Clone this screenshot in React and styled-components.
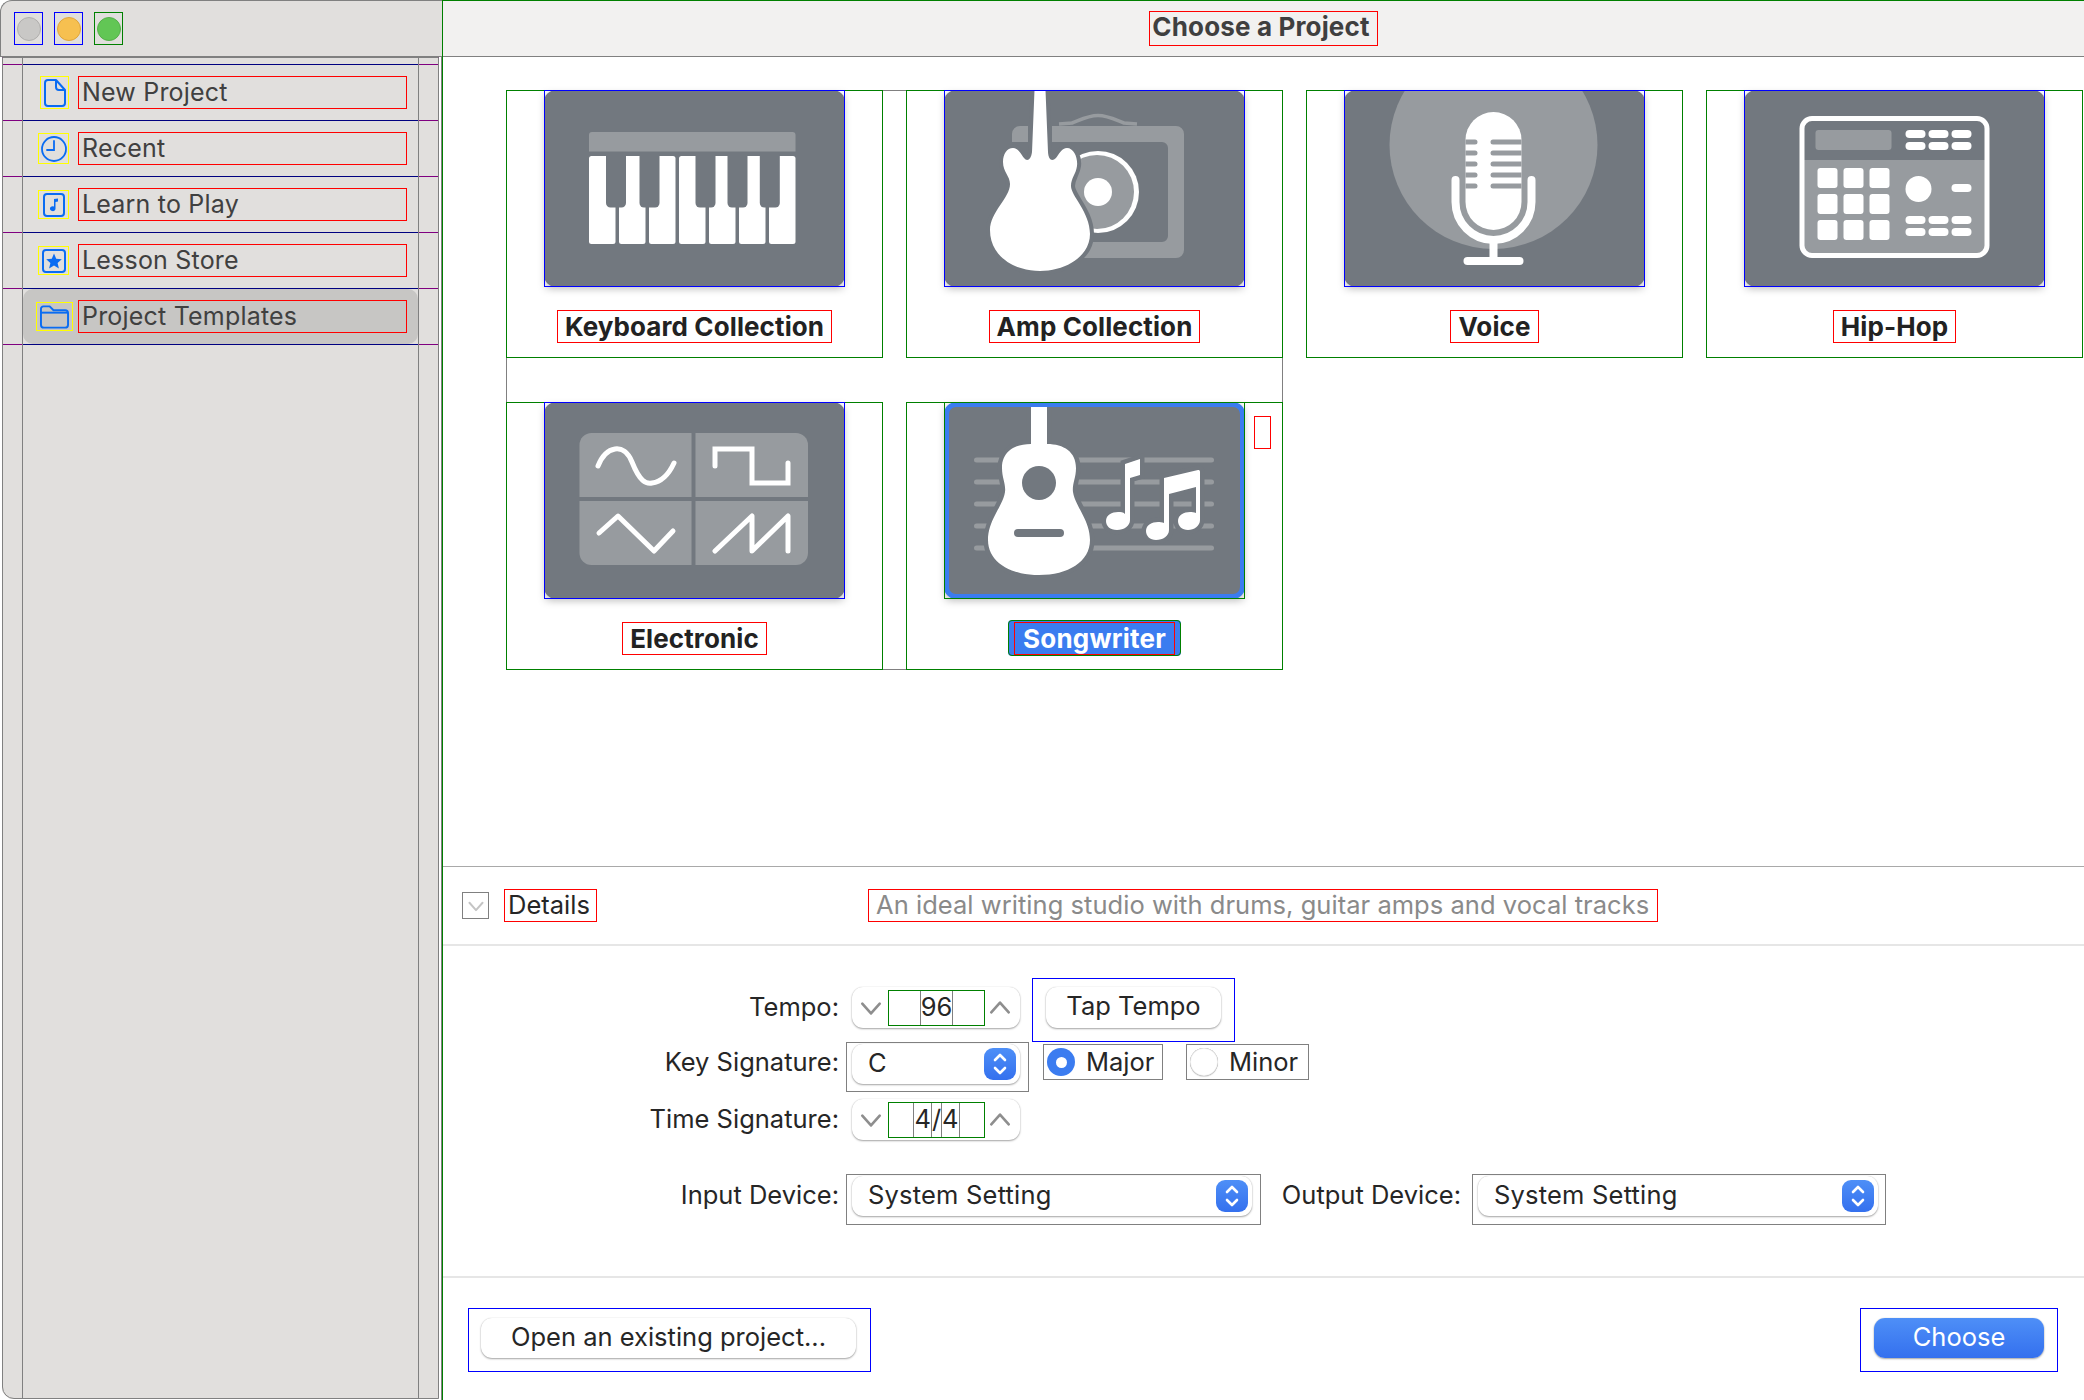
import React from "react";
import { styled, createGlobalStyle, css } from "styled-components";

const Global = createGlobalStyle`
  html, body { margin: 0; padding: 0; background: #fff; }
  body { font-family: Inter, "Noto Sans", "Liberation Sans", sans-serif; overflow: hidden; }
  * { box-sizing: border-box; }
`;

// the reference carries 1px debug frames round most parts
const frame = (c) => css`
  outline: 1px solid ${c};
  outline-offset: -1px;
`;

const GRAY = "#808080";
const BLUE = "#0000ff";
const RED = "#ff0000";
const GREEN = "#008000";
const PURPLE = "#800080";
const NAVY = "#000080";
const YELLOW = "#ffff00";
const TILE = "#72787f";
const SOFT = "#979b9f";
const SYS = "#0a6cf2";

const Page = styled.div`
  width: 2084px;
  height: 1400px;
  display: flex;
  background: #fff;
`;

const Sidebar = styled.aside`
  width: 442px;
  height: 1400px;
  display: flex;
  flex-direction: column;
  border-right: 1px solid ${GRAY};
  padding-bottom: 1px;
`;
const LightsBar = styled.div`
  height: 57px;
  flex: none;
  display: flex;
  align-items: center;
  gap: 11px;
  padding-left: 13px;
  background: #e1dfdd;
  border-top: 1px solid ${GRAY};
  border-left: 1px solid ${GRAY};
  border-top-left-radius: 12px;
  border-bottom: 1px solid ${GRAY};
  margin-right: -1px;
`;
const LightFrame = styled.div`
  width: 29px;
  height: 33px;
  display: flex;
  align-items: center;
  justify-content: center;
  ${(p) => frame(p.$frame)}
`;
const Light = styled.span`
  width: 24px;
  height: 24px;
  border-radius: 50%;
  background: ${(p) => p.$c};
  border: 1px solid ${(p) => p.$b};
`;
const SideBody = styled.div`
  flex: 1;
  display: flex;
  margin-left: 2px;
  width: 437px;
  background: #e1dfdd;
  border-bottom-left-radius: 12px;
  ${frame(GRAY)}
`;
const Gutter = styled.div`
  width: 20px;
  flex: none;
`;
const GutterCell = styled.div`
  height: ${(p) => p.$h}px;
  margin-bottom: -1px;
  box-shadow: inset 0 1px ${PURPLE}, inset 0 -1px ${PURPLE},
    inset ${(p) => (p.$right ? "-1px" : "1px")} 0 ${PURPLE};
`;
const SideColumn = styled.div`
  flex: 1;
  padding-top: 7px;
  ${frame(GRAY)}
`;
const SideRow = styled.div`
  height: 57px;
  margin-bottom: -1px;
  display: flex;
  box-shadow: inset 0 1px ${NAVY}, inset 0 -1px ${NAVY};
`;
const RowFill = styled.div`
  flex: 1;
  margin: 1px;
  display: flex;
  align-items: center;
  border-radius: 10px;
  background: ${(p) => (p.$active ? "#c7c6c4" : "transparent")};
`;
const IconSlot = styled.div`
  width: 46px;
  flex: none;
  display: flex;
  justify-content: flex-end;
`;
const SideIcon = styled.span`
  display: flex;
  align-items: center;
  justify-content: center;
  flex: none;
  width: ${(p) => p.$w}px;
  height: ${(p) => p.$h}px;
  margin-right: ${(p) => p.$shift || 0}px;
  ${frame(YELLOW)}
`;
const SideLabel = styled.div`
  width: 329px;
  height: 33px;
  margin-left: 9px;
  padding-left: 4px;
  font-size: 25px;
  line-height: 33px;
  color: #404040;
  letter-spacing: 0.2px;
  ${frame(RED)}
`;

const Main = styled.main`
  flex: 1;
  height: 1400px;
  display: flex;
  flex-direction: column;
  border-left: 1px solid ${GREEN};
  border-top: 1px solid ${GREEN};
`;
const TitleBar = styled.header`
  height: 56px;
  flex: none;
  display: flex;
  align-items: center;
  justify-content: center;
  background: #f2f1f0;
  border-bottom: 1px solid ${GRAY};
`;
const Title = styled.h1`
  margin: 0;
  padding: 0 8px 0 3px;
  height: 35px;
  font-size: 26px;
  font-weight: 700;
  line-height: 32px;
  letter-spacing: 0.15px;
  color: #3f3f3f;
  ${frame(RED)}
`;
const Templates = styled.section`
  height: 809px;
  flex: none;
  display: flex;
  align-items: flex-start;
  gap: 23px;
  padding: 33px 0 0 63px;
`;
const CardGroup = styled.div`
  display: grid;
  grid-template-columns: 377px 377px;
  column-gap: 23px;
  row-gap: 44px;
  height: 580px;
  ${frame(GRAY)}
`;
const Card = styled.article`
  position: relative;
  width: 377px;
  height: 268px;
  display: flex;
  flex-direction: column;
  align-items: center;
  padding: 0 38px;
  background: #fff;
  ${frame(GREEN)}
`;
const TileFrame = styled.div`
  flex: none;
  width: 301px;
  height: 197px;
  position: relative;
  filter: drop-shadow(0 3px 3px rgba(0, 0, 0, 0.2));
  &::after {
    content: "";
    position: absolute;
    inset: 0;
    pointer-events: none;
    ${(p) => frame(p.$c)}
  }
`;
const Tile = styled.div`
  width: 301px;
  height: 197px;
  border-radius: 12px;
  background: ${TILE};
  overflow: hidden;
  border: ${(p) => (p.$selected ? "5px solid #3b7cf0" : "none")};
  svg {
    display: block;
    margin: ${(p) => (p.$selected ? "-5px" : "0")};
  }
`;
const CardLabel = styled.div`
  margin-top: 23px;
  height: 33px;
  padding: 0 8px;
  font-size: 26px;
  font-weight: 700;
  line-height: 33px;
  letter-spacing: 0.1px;
  color: #222;
  white-space: nowrap;
  ${frame(RED)}
`;
const SelectedLabelWrap = styled.div`
  margin-top: 21px;
  padding: 2px 6px 1px;
  background: #3b7cf0;
  border-radius: 4px;
  ${frame(GREEN)}
`;
const SelectedLabel = styled.div`
  height: 33px;
  padding: 0 9px;
  font-size: 26px;
  font-weight: 700;
  line-height: 33px;
  letter-spacing: 0.2px;
  color: #fff;
  white-space: nowrap;
  ${frame(RED)}
`;
const CheckSlot = styled.span`
  position: absolute;
  left: 348px;
  top: 14px;
  width: 17px;
  height: 33px;
  ${frame(RED)}
`;

const DetailsBar = styled.div`
  height: 80px;
  flex: none;
  display: flex;
  align-items: center;
  padding-left: 19px;
  border-top: 1px solid #a9a9a9;
  border-bottom: 2px solid #e6e6e6;
`;
const Disclosure = styled.span`
  width: 27px;
  height: 27px;
  display: flex;
  align-items: center;
  justify-content: center;
  ${frame(GRAY)}
`;
const DetailsLabel = styled.div`
  margin-left: 15px;
  width: 93px;
  height: 33px;
  padding-left: 4px;
  font-size: 25.5px;
  line-height: 32px;
  color: #262626;
  ${frame(RED)}
`;
const Description = styled.div`
  margin-left: 271px;
  width: 790px;
  height: 33px;
  padding-left: 8px;
  font-size: 25.5px;
  line-height: 32px;
  letter-spacing: 0.04px;
  color: #8a8a8a;
  white-space: nowrap;
  ${frame(RED)}
`;

const Form = styled.div`
  height: 332px;
  flex: none;
  padding-top: 32px;
  border-bottom: 2px solid #e6e6e6;
  font-size: 25.5px;
`;
const FormRow = styled.div`
  height: ${(p) => p.$h}px;
  display: flex;
  align-items: flex-start;
`;
const FieldLabel = styled.label`
  width: ${(p) => p.$w || 396}px;
  margin-left: ${(p) => p.$left || 0}px;
  margin-top: ${(p) => p.$top}px;
  height: 41px;
  flex: none;
  display: flex;
  align-items: center;
  justify-content: flex-end;
  padding-bottom: 3px;
  color: #262626;
  white-space: nowrap;
`;
const Stepper = styled.div`
  width: 168px;
  height: 41px;
  margin: ${(p) => p.$top}px 0 0 13px;
  display: flex;
  align-items: center;
  border-radius: 11px;
  background: #fff;
  box-shadow: 0 1px 2px rgba(0, 0, 0, 0.35), 0 0 1px rgba(0, 0, 0, 0.2);
`;
const StepArrow = styled.span`
  width: ${(p) => p.$w}px;
  flex: none;
  display: flex;
  justify-content: center;
  padding: ${(p) => p.$pad || 0};
`;
const StepField = styled.div`
  width: 97px;
  height: 36px;
  flex: none;
  display: flex;
  align-items: center;
  justify-content: center;
  ${frame(GREEN)}
`;
const StepValue = styled.div`
  height: 36px;
  display: flex;
  align-items: flex-start;
  padding: 0 1px;
  line-height: 34px;
  color: #262626;
  ${frame(GRAY)}
`;
const Slash = styled.span`
  height: 36px;
  padding: 0 1px;
  ${frame(GRAY)}
`;
const PushFrame = styled.div`
  width: ${(p) => p.$w}px;
  height: 64px;
  margin-left: ${(p) => p.$left || 0}px;
  padding: ${(p) => p.$pad};
  flex: none;
  ${frame(BLUE)}
`;
const PushButton = styled.button`
  width: 100%;
  height: ${(p) => p.$h}px;
  display: flex;
  align-items: center;
  justify-content: center;
  padding: 0 0 4px;
  border: none;
  border-radius: 11px;
  background: #fff;
  font: inherit;
  font-size: 25.5px;
  color: #262626;
  white-space: nowrap;
  box-shadow: 0 1px 2px rgba(0, 0, 0, 0.35), 0 0 1px rgba(0, 0, 0, 0.2);
`;
const PrimaryButton = styled(PushButton)`
  background: linear-gradient(#4e8ff7, #3470ee);
  color: #fff;
`;
const SelectFrame = styled.div`
  width: ${(p) => p.$w}px;
  height: ${(p) => p.$h}px;
  margin-left: ${(p) => p.$left}px;
  padding-top: 2px;
  padding-left: 6px;
  flex: none;
  ${frame(GRAY)}
`;
const Select = styled.div`
  width: ${(p) => p.$w}px;
  height: 40px;
  display: flex;
  align-items: center;
  justify-content: space-between;
  padding: 0 4px 0 16px;
  border-radius: 11px;
  background: #fff;
  color: #262626;
  box-shadow: 0 1px 2px rgba(0, 0, 0, 0.35), 0 0 1px rgba(0, 0, 0, 0.2);
`;
const SelectText = styled.span`
  margin-top: -3px;
  letter-spacing: 0.2px;
  white-space: nowrap;
`;
const SelectArrows = styled.span`
  width: 32px;
  height: 32px;
  display: flex;
  align-items: center;
  justify-content: center;
  border-radius: 9px;
  background: linear-gradient(#4e8ff7, #3470ee);
`;
const RadioBox = styled.label`
  width: ${(p) => p.$w}px;
  height: 36px;
  margin: 2px 0 0 ${(p) => p.$left}px;
  flex: none;
  display: flex;
  align-items: center;
  gap: 11px;
  padding-left: 4px;
  color: #262626;
  ${frame(GRAY)}
`;
const RadioText = styled.span`
  margin-top: -1px;
`;
const RadioDot = styled.span`
  width: 28px;
  height: 28px;
  flex: none;
  border-radius: 50%;
  display: flex;
  align-items: center;
  justify-content: center;
  background: ${(p) => (p.$on ? "#3b7cf0" : "#fff")};
  box-shadow: ${(p) => (p.$on ? "none" : "inset 0 0 1px rgba(0,0,0,.6), 0 1px 1px rgba(0,0,0,.15)")};
  &::after {
    content: "";
    width: 11px;
    height: 11px;
    border-radius: 50%;
    background: ${(p) => (p.$on ? "#fff" : "transparent")};
  }
`;
const Footer = styled.footer`
  flex: 1;
  display: flex;
  justify-content: space-between;
  padding: 30px 26px 0 25px;
`;

const Chevron = ({ up, color = "#8e8e8e", size = 24, sw = 2.4 }) => (
  <svg width={size} height={size} viewBox="0 0 22 22" fill="none" stroke={color} strokeWidth={sw} strokeLinecap="round" strokeLinejoin="round">
    <path d={up ? "M3 15 L11 6 L19 15" : "M3 7 L11 16 L19 7"} />
  </svg>
);
const UpDown = () => (
  <svg width="18" height="26" viewBox="0 0 18 26" fill="none" stroke="#fff" strokeWidth="2.6" strokeLinecap="round" strokeLinejoin="round">
    <path d="M4 9 L9 4 L14 9 M4 17 L9 22 L14 17" />
  </svg>
);

const DocIcon = () => (
  <svg width="22" height="28" viewBox="0 0 22 28" fill="none" stroke={SYS} strokeWidth="2" strokeLinejoin="round">
    <path d="M4 1 H12 L21 11 V24 A3 3 0 0 1 18 27 H4 A3 3 0 0 1 1 24 V4 A3 3 0 0 1 4 1 Z" />
    <path d="M12 1 V8 A3 3 0 0 0 15 11 H21" />
  </svg>
);
const ClockIcon = () => (
  <svg width="26" height="26" viewBox="0 0 26 26" fill="none" stroke={SYS} strokeWidth="1.8" strokeLinecap="round">
    <circle cx="13" cy="13" r="12" />
    <path d="M13 5 V14 H6" />
  </svg>
);
const MusicIcon = () => (
  <svg width="22" height="24" viewBox="0 0 22 24" fill="none">
    <rect x="1" y="1" width="20" height="22" rx="3" stroke={SYS} strokeWidth="2" />
    <path d="M11 6 L15 5.5 V8.5 L12.5 9 V15.5 A2.8 2.4 0 1 1 11 13.6 Z" fill={SYS} />
  </svg>
);
const StarIcon = () => (
  <svg width="24" height="24" viewBox="0 0 24 24" fill="none">
    <rect x="1" y="1" width="22" height="22" rx="3" stroke={SYS} strokeWidth="2" />
    <path d="M12 4.5 L14.2 9.7 L19.8 10.2 L15.6 13.9 L16.9 19.4 L12 16.5 L7.1 19.4 L8.4 13.9 L4.2 10.2 L9.8 9.7 Z" fill={SYS} />
  </svg>
);
const FolderIcon = () => (
  <svg width="29" height="24" viewBox="0 0 30 24" fill="none" stroke={SYS} strokeWidth="2" strokeLinejoin="round">
    <path d="M1 6 V3.5 A2.5 2.5 0 0 1 3.5 1 H10 L14 5 H26 A3 3 0 0 1 29 8 V20 A3 3 0 0 1 26 23 H4 A3 3 0 0 1 1 20 Z" />
    <path d="M1 7.5 H29" />
  </svg>
);

const KeyboardArt = () => (
  <svg width="300" height="196" viewBox="0 0 300 196">
    <path d="M45 61.5 V45 a3 3 0 0 1 3 -3 H248.500 a3 3 0 0 1 3 3 V61.500 Z" fill={SOFT} />
    {[0, 1, 2, 3, 4, 5, 6].map((i) => (
      <rect key={i} x={45 + i * 30} y="66" width="26.500" height="88" rx="2.500" fill="#fff" />
    ))}
    {[62, 95.5, 151.5, 183.5, 215.8].map((x) => (
      <path key={x} d={`M${x} 64 h20 v49 a4.500 4.500 0 0 1 -4.500 4.500 h-11 a4.500 4.500 0 0 1 -4.500 -4.500 Z`} fill={TILE} />
    ))}
  </svg>
);

const AmpArt = () => (
  <svg width="300" height="196" viewBox="0 0 300 196">
    <path fillRule="evenodd" d="M75 36 H232 a8 8 0 0 1 8 8 V160 a8 8 0 0 1 -8 8 H76 a8 8 0 0 1 -8 -8 V44 a8 8 0 0 1 8 -8 Z M80 52 V152 H218 a6 6 0 0 0 6 -6 V58 a6 6 0 0 0 -6 -6 Z" fill={SOFT} />
    <rect x="60" y="52" width="30" height="120" fill={TILE} />
    <path d="M115 34 L128 33 C136 30 144 25.500 154 25.500 C164 25.500 172 30 180 33 L193 34" fill="none" stroke={SOFT} strokeWidth="3.500" />
    <circle cx="154" cy="102" r="41" fill="#fff" />
    <circle cx="153" cy="102" r="37" fill={SOFT} />
    <circle cx="154" cy="102" r="14" fill="#fff" />
    <rect x="84" y="0" width="24" height="70" fill={TILE} />
    <path
      d="M90.500 0 H101.500 L104 62 C104.500 70 108 72 112 68 C115 64 118 58 123 58 C130 58 134 68 133 76 C132 84 127 88 127 96 C127 106 146 122 146 144 C146 166 122 181 96 181 C70 181 46 166 46 140 C46 122 66 108 66 94 C66 86 59 82 59 72 C59 64 63 58 69 58 C74 58 77 64 80 68 C83 72 87 70 88 62 Z"
      fill="#fff"
      stroke={TILE}
      strokeWidth="8"
      paintOrder="stroke"
    />
  </svg>
);

const VoiceArt = () => (
  <svg width="300" height="196" viewBox="0 0 300 196">
    <circle cx="149.500" cy="55" r="104" fill={SOFT} />
    <path d="M121.500 50 A28 28 0 0 1 177.500 50 V112 A28 28 0 0 1 121.500 112 Z" fill="#fff" />
    {[52, 63, 74, 85, 96].map((y) => (
      <g key={y} fill={SOFT}>
        <path d={`M121.500 ${y - 2.5} H131 a2.500 2.500 0 0 1 0 5 H121.500 Z`} />
        <path d={`M177.500 ${y - 2.5} H149 a2.500 2.500 0 0 0 0 5 H177.500 Z`} />
      </g>
    ))}
    <path d="M111.500 90 V112 A38 38 0 0 0 187.500 112 V90" fill="none" stroke="#fff" strokeWidth="8" strokeLinecap="round" />
    <rect x="145.500" y="150" width="8" height="20" fill="#fff" />
    <rect x="119.500" y="167" width="60" height="8" rx="4" fill="#fff" />
  </svg>
);

const pillX = [161.5, 184.5, 207.5];
const padX = [73.5, 99.5, 125.5];
const padY = [78, 104, 130];
const HipHopArt = () => (
  <svg width="300" height="196" viewBox="0 0 300 196">
    <path d="M58 70 H243 V156 a9 9 0 0 1 -9 9 H67 a9 9 0 0 1 -9 -9 Z" fill={SOFT} />
    <rect x="58" y="28.500" width="185" height="137" rx="10" fill="none" stroke="#fff" strokeWidth="5" />
    <rect x="71.500" y="40" width="76" height="20" rx="3" fill={SOFT} />
    {[40, 52, 126, 138].map((y) =>
      pillX.map((x) => <rect key={`${x}-${y}`} x={x} y={y} width="20" height="8" rx="4" fill="#fff" />)
    )}
    {padY.map((y) =>
      padX.map((x) => <rect key={`${x}-${y}`} x={x} y={y} width="20" height="20" rx="3" fill="#fff" />)
    )}
    <circle cx="174.500" cy="99" r="13" fill="#fff" />
    <rect x="207.500" y="94" width="20" height="8" rx="4" fill="#fff" />
  </svg>
);

const ElectronicArt = () => (
  <svg width="300" height="196" viewBox="0 0 300 196">
    <path d="M47.500 31 H147.500 V95 H35.500 V43 a12 12 0 0 1 12 -12 Z" fill={SOFT} />
    <path d="M151.500 31 H252 a12 12 0 0 1 12 12 V95 H151.500 Z" fill={SOFT} />
    <path d="M35.500 99 H147.500 V163 H47.500 a12 12 0 0 1 -12 -12 Z" fill={SOFT} />
    <path d="M151.500 99 H264 V151 a12 12 0 0 1 -12 12 H151.500 Z" fill={SOFT} />
    <g fill="none" stroke="#fff" strokeWidth="5" strokeLinecap="round" strokeLinejoin="round">
      <path d="M54 64 C62 44 80 40 88 60 C96 80 102 82 108 81 C116 80 124 74 130 61" />
      <path d="M171 64 V47 H208 V81 H244 V61" strokeLinejoin="miter" />
      <path d="M55 131 L74 114 L110 149 L129 129" />
      <path d="M171 149 L208 114 V149 L244 114 V149" />
    </g>
  </svg>
);

const SongwriterArt = () => (
  <svg width="300" height="196" viewBox="0 0 300 196">
    {[58, 80, 102, 124, 146].map((y) => (
      <rect key={y} x="30" y={y - 2.5} width="240" height="5" rx="2.500" fill={SOFT} />
    ))}
    <g fill="#fff" stroke={TILE} strokeWidth="9" paintOrder="stroke">
      <path d="M181 62 L196 57 V73 L186 76 V118 C186 124 180 128 173 128 C166 128 162 124 162 119 C162 113 168 110 174 110 C177 110 179 110 181 112 Z" />
      <path d="M220 76 L254 68 C255.500 68 256 68.500 256 70 V118 C256 124 250 128 244 128 C238 128 234 124 234 119 C234 113 240 110 246 110 C248 110 250 110 252 111 V85 L225 92 V128 C225 134 219 138 212 138 C206 138 202 134 202 129 C202 123 208 120 214 120 C216 120 218 120 220 121 Z" />
      <path d="M87 4 H103 V42 C120 42 132 50 132 66 C132 76 128 82 129 90 C131 104 146 118 146 138 C146 160 124 173 95 173 C66 173 44 160 44 138 C44 118 59 104 61 90 C62 82 58 76 58 66 C58 50 70 42 87 42 Z" />
    </g>
    <circle cx="95" cy="81" r="17" fill={TILE} />
    <rect x="70" y="127" width="50" height="8" rx="4" fill={TILE} />
  </svg>
);

const sideItems = [
  { label: "New Project", icon: <DocIcon />, w: 29, h: 33 },
  { label: "Recent", icon: <ClockIcon />, w: 31, h: 31 },
  { label: "Learn to Play", icon: <MusicIcon />, w: 31, h: 29 },
  { label: "Lesson Store", icon: <StarIcon />, w: 31, h: 29 },
  { label: "Project Templates", icon: <FolderIcon />, w: 37, h: 29, shift: -4, active: true },
];

const GutterColumn = ({ right }) => (
  <Gutter>
    <GutterCell $h={8} $right={right} />
    {sideItems.map((i) => (
      <GutterCell key={i.label} $h={57} $right={right} />
    ))}
  </Gutter>
);

const TemplateCard = ({ name, art, selected }) => (
  <Card>
    <TileFrame $c={selected ? GREEN : BLUE}>
      <Tile $selected={selected}>{art}</Tile>
    </TileFrame>
    {selected ? (
      <SelectedLabelWrap>
        <SelectedLabel>{name}</SelectedLabel>
      </SelectedLabelWrap>
    ) : (
      <CardLabel>{name}</CardLabel>
    )}
    {selected && <CheckSlot />}
  </Card>
);

export default function App() {
  return (
    <Page>
      <Global />
      <Sidebar>
        <LightsBar>
          <LightFrame $frame={BLUE}><Light $c="#c9c8c6" $b="#b0afad" /></LightFrame>
          <LightFrame $frame={BLUE}><Light $c="#f6c050" $b="#dfa63c" /></LightFrame>
          <LightFrame $frame={GREEN}><Light $c="#62c655" $b="#55b04a" /></LightFrame>
        </LightsBar>
        <SideBody>
          <GutterColumn />
          <SideColumn>
            {sideItems.map((item) => (
              <SideRow key={item.label}>
                <RowFill $active={item.active}>
                  <IconSlot>
                    <SideIcon $w={item.w} $h={item.h} $shift={item.shift}>{item.icon}</SideIcon>
                  </IconSlot>
                  <SideLabel>{item.label}</SideLabel>
                </RowFill>
              </SideRow>
            ))}
          </SideColumn>
          <GutterColumn right />
        </SideBody>
      </Sidebar>

      <Main>
        <TitleBar>
          <Title>Choose a Project</Title>
        </TitleBar>
        <Templates>
          <CardGroup>
            <TemplateCard name="Keyboard Collection" art={<KeyboardArt />} />
            <TemplateCard name="Amp Collection" art={<AmpArt />} />
            <TemplateCard name="Electronic" art={<ElectronicArt />} />
            <TemplateCard name="Songwriter" art={<SongwriterArt />} selected />
          </CardGroup>
          <TemplateCard name="Voice" art={<VoiceArt />} />
          <TemplateCard name="Hip-Hop" art={<HipHopArt />} />
        </Templates>

        <DetailsBar>
          <Disclosure><Chevron color="#c4c4c4" size={18} /></Disclosure>
          <DetailsLabel>Details</DetailsLabel>
          <Description>An ideal writing studio with drums, guitar amps and vocal tracks</Description>
        </DetailsBar>

        <Form>
          <FormRow $h={64}>
            <FieldLabel $top={9}>Tempo:</FieldLabel>
            <Stepper $top={9}>
              <StepArrow $w={36} $pad="0 0 0 2px"><Chevron /></StepArrow>
              <StepField><StepValue>96</StepValue></StepField>
              <StepArrow $w={35} $pad="0 5px 0 0"><Chevron up /></StepArrow>
            </Stepper>
            <PushFrame $w={203} $left={12} $pad="9px 14px">
              <PushButton $h={41}>Tap Tempo</PushButton>
            </PushFrame>
          </FormRow>
          <FormRow $h={50}>
            <FieldLabel $top={0}>Key Signature:</FieldLabel>
            <SelectFrame $w={183} $h={50} $left={7}>
              <Select $w={168}><SelectText>C</SelectText><SelectArrows><UpDown /></SelectArrows></Select>
            </SelectFrame>
            <RadioBox $w={120} $left={14}><RadioDot $on /><RadioText>Major</RadioText></RadioBox>
            <RadioBox $w={123} $left={23}><RadioDot /><RadioText>Minor</RadioText></RadioBox>
          </FormRow>
          <FormRow $h={82}>
            <FieldLabel $top={7}>Time Signature:</FieldLabel>
            <Stepper $top={7}>
              <StepArrow $w={36} $pad="0 0 0 2px"><Chevron /></StepArrow>
              <StepField><StepValue>4<Slash>/</Slash>4</StepValue></StepField>
              <StepArrow $w={35} $pad="0 5px 0 0"><Chevron up /></StepArrow>
            </Stepper>
          </FormRow>
          <FormRow $h={51}>
            <FieldLabel $top={1}>Input Device:</FieldLabel>
            <SelectFrame $w={415} $h={51} $left={7}>
              <Select $w={400}><SelectText>System Setting</SelectText><SelectArrows><UpDown /></SelectArrows></Select>
            </SelectFrame>
            <FieldLabel $w={180} $top={1} $left={20}>Output Device:</FieldLabel>
            <SelectFrame $w={414} $h={51} $left={11}>
              <Select $w={400}><SelectText>System Setting</SelectText><SelectArrows><UpDown /></SelectArrows></Select>
            </SelectFrame>
          </FormRow>
        </Form>

        <Footer>
          <PushFrame $w={403} $pad="10px 15px 0 13px">
            <PushButton $h={40}>Open an existing project...</PushButton>
          </PushFrame>
          <PushFrame $w={198} $pad="10px 14px 0">
            <PrimaryButton $h={40}>Choose</PrimaryButton>
          </PushFrame>
        </Footer>
      </Main>
    </Page>
  );
}
